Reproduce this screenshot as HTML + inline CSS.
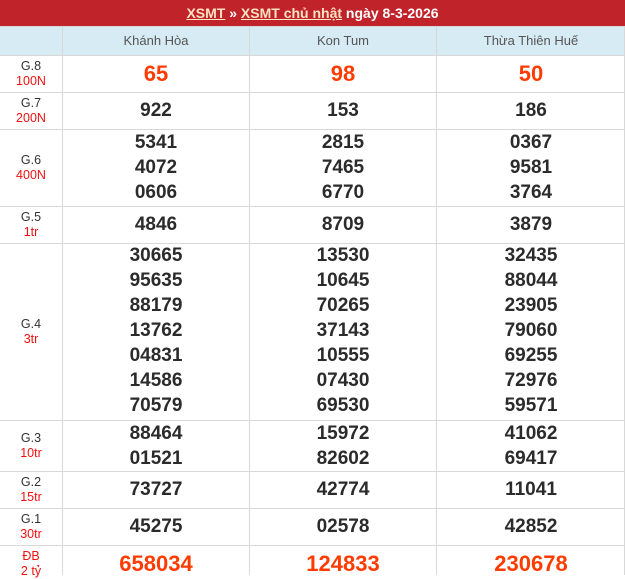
<!DOCTYPE html>
<html><head><meta charset="utf-8"><style>
*{margin:0;padding:0;box-sizing:border-box}
body{width:625px;height:575px;overflow:hidden;background:#fff;font-family:"Liberation Sans",Arial,sans-serif;position:relative}
.top{position:absolute;left:0;top:0;width:625px;height:26px;background:#c0232a;color:#fff;font-weight:bold;font-size:14px;text-align:center;line-height:26px}
.top a{color:#fde3c0;text-decoration:underline}
.hl{position:absolute;left:0;width:625px;height:1px;background:#d8d8d8}
.vl{position:absolute;top:26px;width:1px;height:549px;background:#d8d8d8}
.hdr{position:absolute;top:27px;height:28px;background:#d7ebf4;color:#555;font-size:13px;text-align:center;line-height:28px}
.c{position:absolute;text-align:center;font-weight:bold;font-size:19px;color:#2b2b2b;line-height:25px}
.r{color:#ff3c00;font-size:22px}
.lb{position:absolute;left:0;width:62px;text-align:center;font-size:12.5px;color:#333;line-height:15px}
.lb span{color:#f01010;display:block}
</style></head><body>
<div class="top"><a>XSMT</a> » <a>XSMT chủ nhật</a> ngày 8-3-2026</div>
<div class="hdr" style="left:0;width:62px"></div>
<div class="hdr" style="left:63px;width:186px">Khánh Hòa</div>
<div class="hdr" style="left:250px;width:186px">Kon Tum</div>
<div class="hdr" style="left:437px;width:188px">Thừa Thiên Huế</div>
<div class="hl" style="top:26px"></div>
<div class="hl" style="top:55px"></div>
<div class="hl" style="top:92px"></div>
<div class="hl" style="top:129px"></div>
<div class="hl" style="top:206px"></div>
<div class="hl" style="top:243px"></div>
<div class="hl" style="top:420px"></div>
<div class="hl" style="top:471px"></div>
<div class="hl" style="top:508px"></div>
<div class="hl" style="top:545px"></div>
<div class="vl" style="left:62px"></div>
<div class="vl" style="left:249px"></div>
<div class="vl" style="left:436px"></div>
<div class="vl" style="left:624px"></div>

<div class="lb" style="top:59px">G.8<span>100N</span></div>
<div class="lb" style="top:96px">G.7<span>200N</span></div>
<div class="lb" style="top:153px">G.6<span>400N</span></div>
<div class="lb" style="top:210px">G.5<span>1tr</span></div>
<div class="lb" style="top:317px">G.4<span>3tr</span></div>
<div class="lb" style="top:431px">G.3<span>10tr</span></div>
<div class="lb" style="top:475px">G.2<span>15tr</span></div>
<div class="lb" style="top:512px">G.1<span>30tr</span></div>
<div class="lb" style="top:549px;color:#f01010">ĐB<span>2 tỷ</span></div>

<div class="c r" style="left:63px;width:186px;top:61px">65</div>
<div class="c r" style="left:250px;width:186px;top:61px">98</div>
<div class="c r" style="left:437px;width:188px;top:61px">50</div>

<div class="c" style="left:63px;width:186px;top:98px">922</div>
<div class="c" style="left:250px;width:186px;top:98px">153</div>
<div class="c" style="left:437px;width:188px;top:98px">186</div>

<div class="c" style="left:63px;width:186px;top:130px">5341<br>4072<br>0606</div>
<div class="c" style="left:250px;width:186px;top:130px">2815<br>7465<br>6770</div>
<div class="c" style="left:437px;width:188px;top:130px">0367<br>9581<br>3764</div>

<div class="c" style="left:63px;width:186px;top:212px">4846</div>
<div class="c" style="left:250px;width:186px;top:212px">8709</div>
<div class="c" style="left:437px;width:188px;top:212px">3879</div>

<div class="c" style="left:63px;width:186px;top:243px">30665<br>95635<br>88179<br>13762<br>04831<br>14586<br>70579</div>
<div class="c" style="left:250px;width:186px;top:243px">13530<br>10645<br>70265<br>37143<br>10555<br>07430<br>69530</div>
<div class="c" style="left:437px;width:188px;top:243px">32435<br>88044<br>23905<br>79060<br>69255<br>72976<br>59571</div>

<div class="c" style="left:63px;width:186px;top:421px">88464<br>01521</div>
<div class="c" style="left:250px;width:186px;top:421px">15972<br>82602</div>
<div class="c" style="left:437px;width:188px;top:421px">41062<br>69417</div>

<div class="c" style="left:63px;width:186px;top:477px">73727</div>
<div class="c" style="left:250px;width:186px;top:477px">42774</div>
<div class="c" style="left:437px;width:188px;top:477px">11041</div>

<div class="c" style="left:63px;width:186px;top:514px">45275</div>
<div class="c" style="left:250px;width:186px;top:514px">02578</div>
<div class="c" style="left:437px;width:188px;top:514px">42852</div>

<div class="c r" style="left:63px;width:186px;top:551px">658034</div>
<div class="c r" style="left:250px;width:186px;top:551px">124833</div>
<div class="c r" style="left:437px;width:188px;top:551px">230678</div>
</body></html>
